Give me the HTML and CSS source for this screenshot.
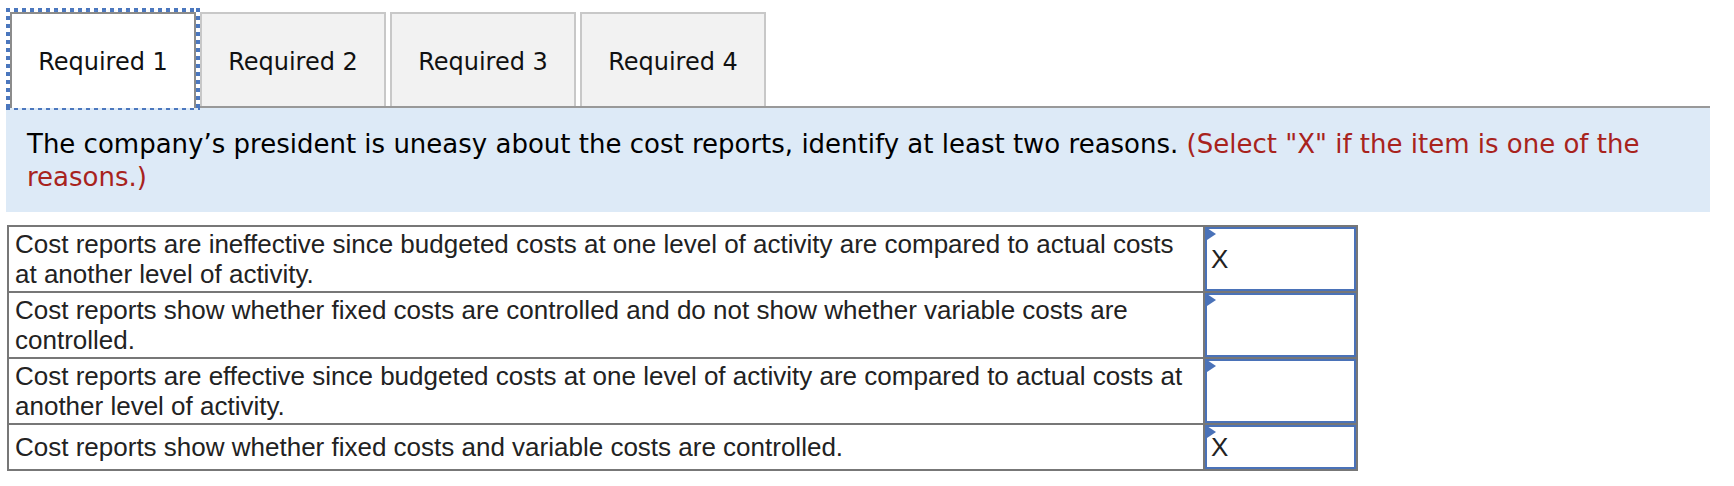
FILE: index.html
```html
<!DOCTYPE html>
<html lang="en">
<head>
<meta charset="utf-8">
<title>Required</title>
<link rel="stylesheet" href="styles.css">
</head>
<body>
<div class="page">
  <div class="tabs">
    <div class="tab active">Required 1</div>
    <div class="tab">Required 2</div>
    <div class="tab">Required 3</div>
    <div class="tab">Required 4</div>
  </div>
  <div class="panel">
    The company’s president is uneasy about the cost reports, identify at least two reasons. <span class="hint">(Select "X" if the item is one of the reasons.)</span>
  </div>
  <table class="answers">
    <colgroup><col class="c-text"><col class="c-inp"></colgroup>
    <tr>
      <td class="txt">Cost reports are ineffective since budgeted costs at one level of activity are compared to actual costs at another level of activity.</td>
      <td class="inp">X</td>
    </tr>
    <tr>
      <td class="txt">Cost reports show whether fixed costs are controlled and do not show whether variable costs are controlled.</td>
      <td class="inp"></td>
    </tr>
    <tr>
      <td class="txt">Cost reports are effective since budgeted costs at one level of activity are compared to actual costs at another level of activity.</td>
      <td class="inp"></td>
    </tr>
    <tr>
      <td class="txt">Cost reports show whether fixed costs and variable costs are controlled.</td>
      <td class="inp">X</td>
    </tr>
  </table>
</div>
</body>
</html>
```
FILE: styles.css
```css
html, body {
  margin: 0;
  padding: 0;
  background: #fff;
}

.page {
  padding-top: 12px;
}

.tabs {
  display: flex;
  align-items: flex-start;
  gap: 4px;
  margin-left: 6px;
  width: 1700px;
  padding-left: 4px;
  border-bottom: 2px solid #999;
}

.tab {
  box-sizing: border-box;
  width: 186px;
  height: 94px;
  padding-top: 4px;
  display: flex;
  align-items: center;
  justify-content: center;
  background: #f2f2f2;
  border: 2px solid #c8c8c8;
  border-bottom: none;
  font-family: "DejaVu Sans", Verdana, sans-serif;
  font-size: 24px;
  color: #111;
}

.tab.active {
  position: relative;
  z-index: 2;
  height: 96px;
  margin-bottom: -2px;
  background: #fff;
  border-color: #8c8c8c;
  padding-bottom: 2px;
}

.tab.active::after {
  content: "";
  position: absolute;
  left: -6px;
  right: -6px;
  top: -6px;
  bottom: -2px;
  background:
    repeating-linear-gradient(to right, #4b77be 0 4px, transparent 4px 8px) left top / 100% 4px no-repeat,
    repeating-linear-gradient(to right, #4b77be 0 4px, transparent 4px 8px) left bottom / 100% 2px no-repeat,
    repeating-linear-gradient(to bottom, #4b77be 0 4px, transparent 4px 8px) left top / 4px 100% no-repeat,
    repeating-linear-gradient(to bottom, #4b77be 0 4px, transparent 4px 8px) right top / 4px 100% no-repeat;
  pointer-events: none;
}

.panel {
  box-sizing: border-box;
  margin-left: 6px;
  width: 1704px;
  height: 104px;
  padding: 20px 21px 18px 21px;
  background: #ddeaf7;
  font-family: "DejaVu Sans", Verdana, sans-serif;
  font-size: 26px;
  line-height: 33px;
  color: #000;
}

.hint {
  color: #a8231d;
}

.answers {
  margin-top: 13px;
  margin-left: 7px;
  width: 1349px;
  table-layout: fixed;
  border-collapse: collapse;
  border: 2px solid #777;
  font-family: "Liberation Sans", Arial, sans-serif;
  font-size: 26px;
  line-height: 30px;
  color: #222;
}

.c-text { width: 1196px; }
.c-inp { width: 153px; }

.answers td {
  border: 2px solid #777;
  vertical-align: middle;
}

.txt {
  padding: 2px 10px 2px 6px;
}

.inp {
  position: relative;
  height: 44px;
  padding: 0 0 0 6px;
  box-shadow: inset 0 0 0 2px #4a72b8;
  background: #fff;
}

.inp::before {
  content: "";
  position: absolute;
  left: 2px;
  top: 1px;
  width: 0;
  height: 0;
  border-left: 9px solid #4a72b8;
  border-top: 6px solid transparent;
  border-bottom: 6px solid transparent;
}
```
